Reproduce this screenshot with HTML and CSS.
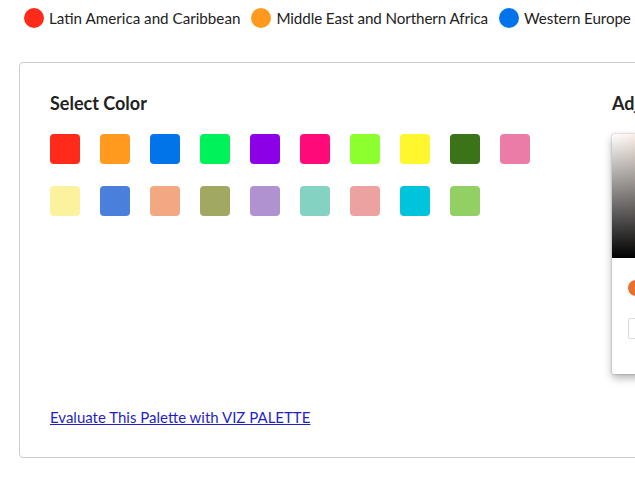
FILE: index.html
```html
<!DOCTYPE html>
<html lang="en">
<head>
  <meta charset="UTF-8">
  <meta name="viewport" content="width=device-width, initial-scale=1.0">
  <title>Palette Builder</title>
  <link rel="stylesheet" href="styles.css">
</head>
<body>

<div class="legend">
  <div class="legend-item"><span class="dot" style="background:#ff2a1a"></span>Latin America and Caribbean</div>
  <div class="legend-item tight"><span class="dot" style="background:#ff9a1f"></span>Middle East and Northern Africa</div>
  <div class="legend-item tight"><span class="dot" style="background:#0074e8"></span>Western Europe</div>
</div>

<div class="card">
  <div class="select-col">
    <h3 class="title">Select Color</h3>
    <div class="swatches">
      <div class="swatch" style="background:#ff2a1a"></div>
      <div class="swatch" style="background:#ff9a1f"></div>
      <div class="swatch" style="background:#0074e8"></div>
      <div class="swatch" style="background:#00f25a"></div>
      <div class="swatch" style="background:#8c00e8"></div>
      <div class="swatch" style="background:#ff0a78"></div>
      <div class="swatch" style="background:#8cff2e"></div>
      <div class="swatch" style="background:#fff72e"></div>
      <div class="swatch" style="background:#3a7318"></div>
      <div class="swatch" style="background:#eb7ca8"></div>
      <div class="swatch" style="background:#fcf29e"></div>
      <div class="swatch" style="background:#4a80dc"></div>
      <div class="swatch" style="background:#f2a880"></div>
      <div class="swatch" style="background:#a0a862"></div>
      <div class="swatch" style="background:#b192d0"></div>
      <div class="swatch" style="background:#84d2c2"></div>
      <div class="swatch" style="background:#eca3a0"></div>
      <div class="swatch" style="background:#00c4dc"></div>
      <div class="swatch" style="background:#92d063"></div>
    </div>
    <a class="viz-link" href="#">Evaluate This Palette with VIZ PALETTE</a>
  </div>

  <div class="adjust-col">
    <h3 class="title">Adjust Color</h3>
    <div class="picker">
      <div class="saturation">
        <div class="sat-white"></div>
        <div class="sat-black"></div>
      </div>
      <div class="picker-body">
        <div class="controls">
          <div class="current"></div>
          <div class="sliders">
            <div class="hue"></div>
            <div class="alpha"></div>
          </div>
        </div>
        <div class="fields">
          <input class="hex-input" value="#E8702A">
          <div class="hex-label">hex</div>
        </div>
      </div>
    </div>
  </div>
</div>

</body>
</html>
```

FILE: styles.css
```css
body {
  font-family: Lato, "Open Sans", sans-serif;
  color: #222;
  background-color: #fff;
  margin: 0;
  padding: 8px 0 0 24px;
  overflow: hidden;
}
.legend {
  display: flex;
  gap: 11px;
  font-size: 15.2px;
  line-height: 20px;
  white-space: nowrap;
}
.legend-item {
  display: flex;
  flex-shrink: 0;
  align-items: center;
  gap: 5px;
}
.legend-item.tight {
  letter-spacing: -0.1px;
}
.dot {
  width: 20px;
  height: 20px;
  border-radius: 50%;
}
.card {
  display: flex;
  width: 900px;
  margin: 34px 0 0 -5px;
  padding: 30px;
  border: 1px solid #ccc;
  border-radius: 4px;
}
.title {
  font-size: 18px;
  line-height: 20px;
  font-weight: bold;
  margin: 0 0 21px;
}
.select-col {
  width: 562px;
  flex-shrink: 0;
  min-height: 334px;
  display: flex;
  flex-direction: column;
}
.swatches {
  display: flex;
  flex-wrap: wrap;
  gap: 22px 20px;
  width: 500px;
}
.swatch {
  width: 30px;
  height: 30px;
  border-radius: 4px;
}
.viz-link {
  margin-top: auto;
  margin-bottom: 1px;
  font-size: 15px;
  color: #1f1fc4;
}
.picker {
  width: 225px;
  background: #fff;
  border-radius: 2px;
  box-shadow: 0 0 2px rgba(0, 0, 0, 0.3), 0 4px 8px rgba(0, 0, 0, 0.3);
}
.saturation {
  position: relative;
  height: 124px;
  background: #e8702a;
  border-radius: 2px 2px 0 0;
  overflow: hidden;
}
.sat-white, .sat-black {
  position: absolute;
  inset: 0;
}
.sat-white {
  background: linear-gradient(to right, #fff, rgba(255, 255, 255, 0));
}
.sat-black {
  background: linear-gradient(to top, #000, rgba(0, 0, 0, 0));
}
.picker-body {
  padding: 16px 16px 12px;
}
.controls {
  display: flex;
}
.current {
  width: 16px;
  height: 16px;
  margin-top: 6px;
  border-radius: 50%;
  background: #e8702a;
}
.sliders {
  flex: 1;
  margin-left: 16px;
}
.hue {
  height: 10px;
  margin-bottom: 8px;
  border-radius: 2px;
  background: linear-gradient(to right, #f00, #ff0, #0f0, #0ff, #00f, #f0f, #f00);
}
.alpha {
  height: 10px;
  border-radius: 2px;
  background: linear-gradient(to right, rgba(232, 112, 42, 0), #e8702a);
}
.fields {
  padding-top: 16px;
}
.hex-input {
  display: block;
  box-sizing: border-box;
  width: 100%;
  height: 21px;
  font-size: 11px;
  color: #333;
  text-align: center;
  border: none;
  border-radius: 2px;
  box-shadow: inset 0 0 0 1px #dadada;
}
.hex-label {
  margin-top: 12px;
  font-size: 11px;
  line-height: 11px;
  color: #969696;
  text-transform: uppercase;
  text-align: center;
}
```
